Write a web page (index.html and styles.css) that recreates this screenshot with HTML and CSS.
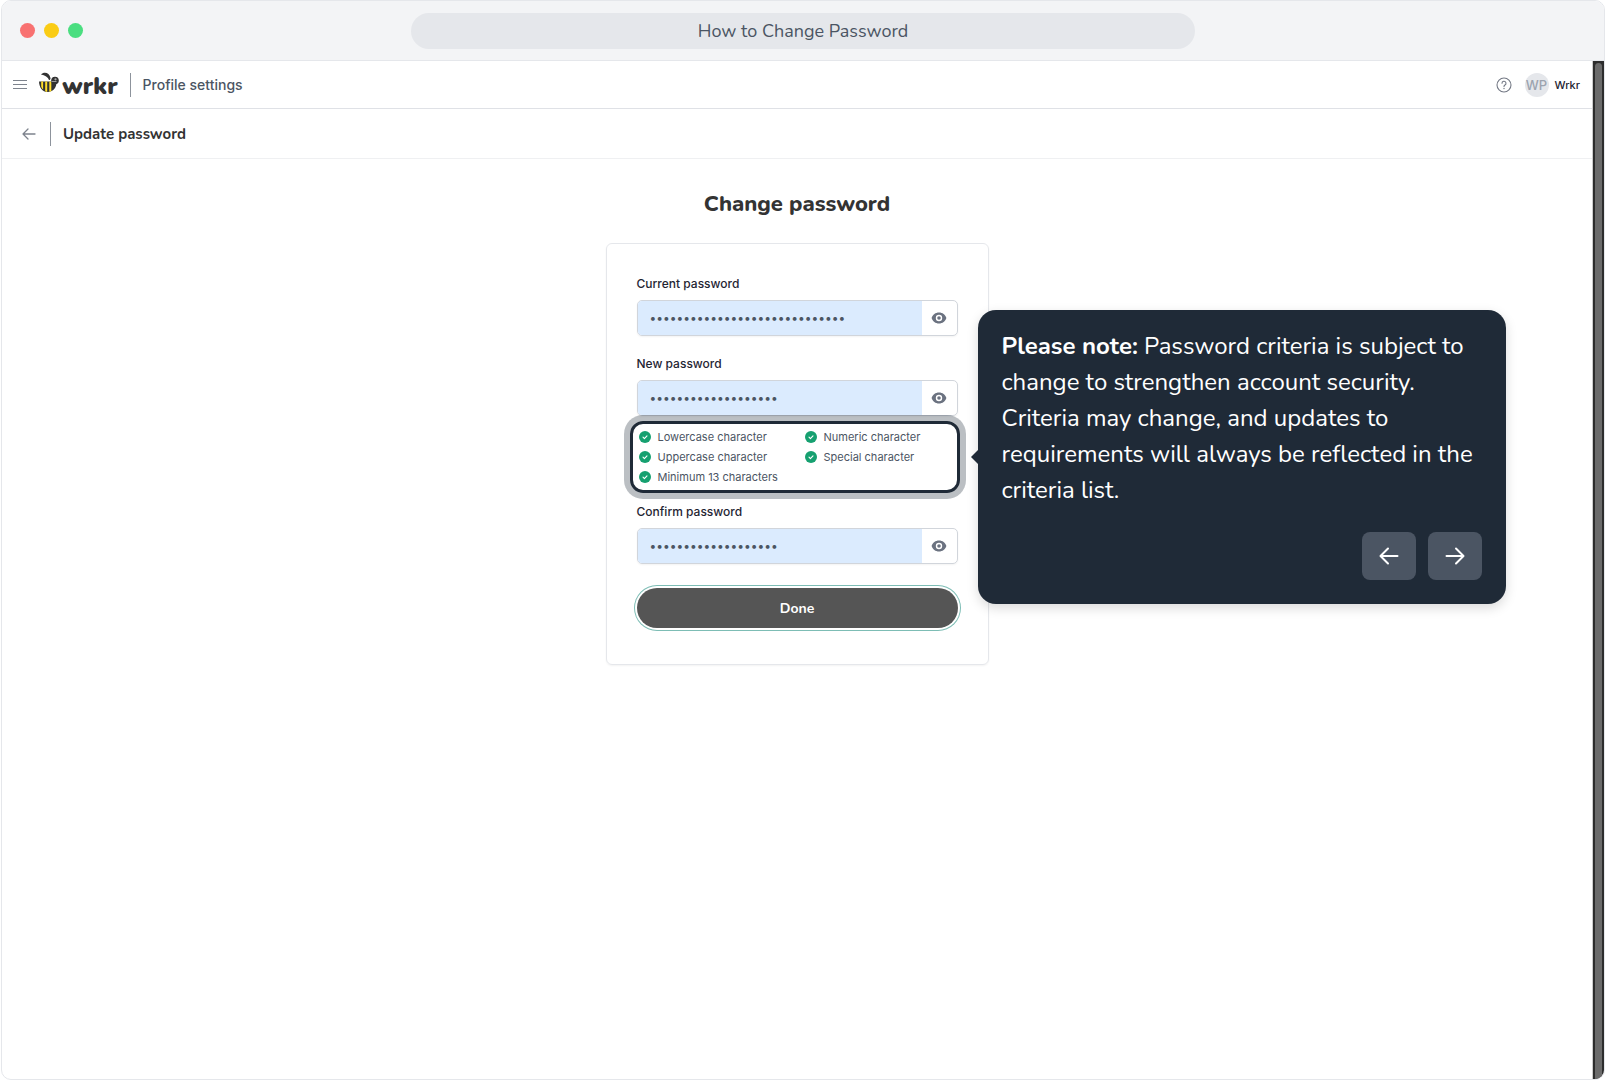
FILE: index.html
```html
<!DOCTYPE html>
<html lang="en">
<head>
<meta charset="utf-8">
<meta name="viewport" content="width=device-width, initial-scale=1">
<title>How to Change Password</title>
<link rel="stylesheet" href="styles.css">
</head>
<body>
<svg class="sprite" aria-hidden="true">
  <symbol id="eye" viewBox="0 0 16 12"><path fill="currentColor" fill-rule="evenodd" d="M8 .5C4.4.500 1.700 2.700.6 6c1.100 3.300 3.800 5.500 7.400 5.500s6.300-2.200 7.400-5.500C14.300 2.700 11.600.5 8 .5ZM8 2.800a3.200 3.200 0 1 1 0 6.400 3.200 3.200 0 0 1 0-6.400ZM8 4.200a1.800 1.800 0 1 0 0 3.600 1.800 1.800 0 0 0 0-3.600Z"/></symbol>
  <symbol id="check" viewBox="0 0 12 12"><circle cx="6" cy="6" r="6" fill="#16a070"/><path d="m4 6.200 1.400 1.400L8 4.800" fill="none" stroke="#fff" stroke-width="1.100" stroke-linecap="round" stroke-linejoin="round"/></symbol>
</svg>
<div class="window">
  <header class="chrome">
    <div class="lights"><span class="light red"></span><span class="light yellow"></span><span class="light green"></span></div>
    <div class="address">How to Change Password</div>
  </header>
  <div class="viewport">
    <div class="page">
      <header class="topbar">
        <button class="icon-btn" aria-label="Menu"><svg width="14" height="12" viewBox="0 0 14 12"><path d="M0 1.500h14M0 5.500h14M0 9.500h14" stroke="#7d838d"/></svg></button>
        <a class="logo" href="#">
          <svg width="20" height="21" viewBox="0 0 20 21" aria-hidden="true">
            <path d="M2 2.500C5-.8 10.500.5 11.500 6c.1 1-.5 2-1.500 2C9 5 6 3.200 2 2.500Z" fill="#333"/>
            <path d="M0 9.500h17.500c.3 6-3.300 10.300-8.700 10.500C3.500 20.200.2 15.500 0 9.500Z" fill="#333"/>
            <path d="M2.200 9.500h1.900v8.100c-1-1-1.600-2.100-1.900-3.200ZM6.200 9.500h2v10.400l-2-.6ZM10.300 9.500h2v9.700l-2 .6Z" fill="#ffdc28"/>
            <circle cx="16" cy="8.500" r="3.800" fill="#333"/><circle cx="16.500" cy="7.300" r="1.100" fill="#aaa"/>
            <path d="M12.500 9.500h5" stroke="#999"/>
          </svg>
          <span>wrkr</span>
        </a>
        <span class="divider"></span>
        <span class="section">Profile settings</span>
        <div class="account">
          <button class="icon-btn" aria-label="Help"><svg width="16" height="16" viewBox="0 0 16 16" fill="none" stroke="#747985" stroke-width="1.100" stroke-linecap="round"><circle cx="8" cy="8" r="7"/><path d="M6 6.300a2 2 0 1 1 3 1.700c-.7.400-1 .8-1 1.400"/><path d="M8 11.500v.1" stroke-width="1.400"/></svg></button>
          <span class="avatar">WP</span>
          <span class="user">Wrkr</span>
        </div>
      </header>
      <div class="subbar">
        <button class="icon-btn" aria-label="Back"><svg width="14" height="12" viewBox="0 0 14 12" fill="none" stroke="#7d838d" stroke-width="1.300" stroke-linecap="round" stroke-linejoin="round"><path d="M13 6H1M6 1 1 6l5 5"/></svg></button>
        <span class="divider"></span>
        <h2>Update password</h2>
      </div>
      <main>
        <h1>Change password</h1>
        <form class="card">
          <label for="current">Current password</label>
          <div class="field">
            <input id="current" type="password" value="currentpassword12345678901234">
            <button type="button" aria-label="Show current password"><svg width="16" height="12"><use href="#eye"/></svg></button>
          </div>
          <label for="new" class="spaced">New password</label>
          <div class="field">
            <input id="new" type="password" value="Newpassword12345678">
            <button type="button" aria-label="Show new password"><svg width="16" height="12"><use href="#eye"/></svg></button>
          </div>
          <div class="highlight">
            <ul>
              <li><svg width="12" height="12"><use href="#check"/></svg>Lowercase character</li>
              <li><svg width="12" height="12"><use href="#check"/></svg>Numeric character</li>
              <li><svg width="12" height="12"><use href="#check"/></svg>Uppercase character</li>
              <li><svg width="12" height="12"><use href="#check"/></svg>Special character</li>
              <li><svg width="12" height="12"><use href="#check"/></svg>Minimum 13 characters</li>
            </ul>
            <aside class="tip">
              <p><strong>Please note:</strong> Password criteria is subject to change to strengthen account security. Criteria may change, and updates to requirements will always be reflected in the criteria list.</p>
              <div class="steps">
                <button type="button" aria-label="Previous step"><svg width="20" height="18" viewBox="0 0 20 18"><path d="M18.500 9H2M9 1.500 1.500 9 9 16.500"/></svg></button>
                <button type="button" aria-label="Next step"><svg width="20" height="18" viewBox="0 0 20 18"><path d="M1.500 9H18M11 1.500 18.500 9 11 16.500"/></svg></button>
              </div>
            </aside>
          </div>
          <label for="confirm">Confirm password</label>
          <div class="field">
            <input id="confirm" type="password" value="Newpassword12345678">
            <button type="button" aria-label="Show confirmed password"><svg width="16" height="12"><use href="#eye"/></svg></button>
          </div>
          <button type="button" class="done">Done</button>
        </form>
      </main>
    </div>
    <div class="scrollbar"><span></span></div>
  </div>
</div>
</body>
</html>
```
FILE: styles.css
```css
* { box-sizing: border-box; }
body { margin: 0; padding: 0 1px; background: #fff; font-family: Inter, sans-serif; color: #1f2533; }
h1, h2, p, ul { margin: 0; padding: 0; }
button { border: 0; padding: 0; background: none; font: inherit; color: inherit; display: flex; align-items: center; justify-content: center; }
svg { display: block; flex: none; }
.sprite { position: absolute; width: 0; height: 0; }

.window { display: flex; flex-direction: column; min-height: 100vh; border: 1px solid #e5e7eb; border-radius: 10px; overflow: hidden; }
.chrome { display: grid; grid-template-columns: 1fr 784px 1fr; align-items: center; height: 60px; padding: 0 18px; background: #f3f4f6; border-bottom: 1px solid #e5e7eb; }
.lights { display: flex; gap: 9px; }
.light { width: 15px; height: 15px; border-radius: 50%; }
.red { background: #f87171; }
.yellow { background: #facc15; }
.green { background: #4ade80; }
.address { height: 36px; border-radius: 18px; background: #e5e7eb; color: #4b5563; font: 18px/36px Nunito, Lato, sans-serif; text-align: center; }

.viewport { display: flex; flex: 1; }
.page { flex: 1; min-width: 0; }
.scrollbar { display: flex; width: 12px; padding: 2px 2px 0 2px; background: #2d2d2d; border-left: 1px solid #ccc; }
.scrollbar span { flex: 1; border-radius: 4px 4px 0 0; background: #6b6b6b; }

.topbar { display: flex; align-items: center; height: 48px; padding: 0 12px 0 11px; border-bottom: 1px solid #dfe1e6; }
.logo { display: flex; align-items: center; gap: 3px; margin-left: 12px; text-decoration: none; color: #333; }
.logo svg { margin-bottom: 4px; }
.logo span { padding-top: 2px; font: 900 24px/32px Nunito, Lato, sans-serif; }
.divider { width: 1px; height: 24px; margin: 0 12px; background: #8d939c; }
.section { color: #4b5563; font-size: 14px; font-weight: 500; }
.account { display: flex; align-items: center; margin-left: auto; }
.avatar { width: 24px; height: 24px; margin: 0 6px 0 13px; border-radius: 50%; background: #e5e7eb; color: #9ca3af; font-size: 13px; font-weight: 500; line-height: 24px; text-align: center; }
.user { font-size: 11px; font-weight: 500; }
.subbar { display: flex; align-items: center; height: 50px; padding: 0 20px; border-bottom: 1px solid #eff0f2; }
.subbar .divider { margin-left: 14px; }
h2 { color: #333; font: 700 15px/24px Nunito, Lato, sans-serif; }

main { display: flex; flex-direction: column; align-items: center; padding: 29px 0; }
h1 { margin-bottom: 23px; color: #333; font: 800 22px/32px Nunito, Lato, sans-serif; }
.card { display: flex; flex-direction: column; width: 383px; padding: 30px 30px 36px; border: 1px solid #e5e7eb; border-radius: 6px; box-shadow: 0 1px 2px #0000000d; }
label { margin-bottom: 6px; font-size: 12px; font-weight: 500; line-height: 20px; }
.spaced { margin-top: 18px; }
.field { display: flex; height: 36px; border: 1px solid #d1d5db; border-radius: 5px; overflow: hidden; box-shadow: 0 1px 2px #0000000d; }
.field input { flex: 1; min-width: 0; border: 0; padding: 0 12px 2px; outline: 0; background: #dbebfe; color: #4b5563; font: 12px Inter, sans-serif; }
.field button { width: 35px; color: #6b7280; }
.highlight { position: relative; margin: 5px -2px 9px -7px; padding: 3px 6px; border: 3px solid #1f2a37; border-radius: 13px; box-shadow: 0 0 0 6px #1f2a374d; }
.highlight ul { display: grid; grid-template-columns: 166px 1fr; list-style: none; }
.highlight li { display: flex; align-items: center; gap: 7px; color: #4b5563; font-size: 11px; line-height: 20px; }
.done { height: 40px; margin-top: 24px; border-radius: 20px; background: #555; color: #fff; font: 700 14px Nunito, Lato, sans-serif; box-shadow: 0 0 0 2px #fff, 0 0 0 3px #7dbdb5; }

.tip { position: absolute; left: calc(100% + 21px); top: 50%; width: 528px; padding: 18px 24px 24px; transform: translateY(-50%); border-radius: 18px; background: #1f2a37; color: #fff; box-shadow: 0 4px 12px #00000026; }
.tip::before { content: ""; position: absolute; right: 100%; top: calc(50% - 7px); border: solid transparent; border-width: 7px 7px 7px 0; border-right-color: #1f2a37; }
.tip p { font: 24px/36px Nunito, Lato, sans-serif; }
.steps { display: flex; justify-content: flex-end; gap: 12px; margin-top: 24px; }
.steps button { width: 54px; height: 48px; border-radius: 8px; background: #4b5563; }
.steps path { fill: none; stroke: #fff; stroke-width: 2; stroke-linecap: round; stroke-linejoin: round; }
```
